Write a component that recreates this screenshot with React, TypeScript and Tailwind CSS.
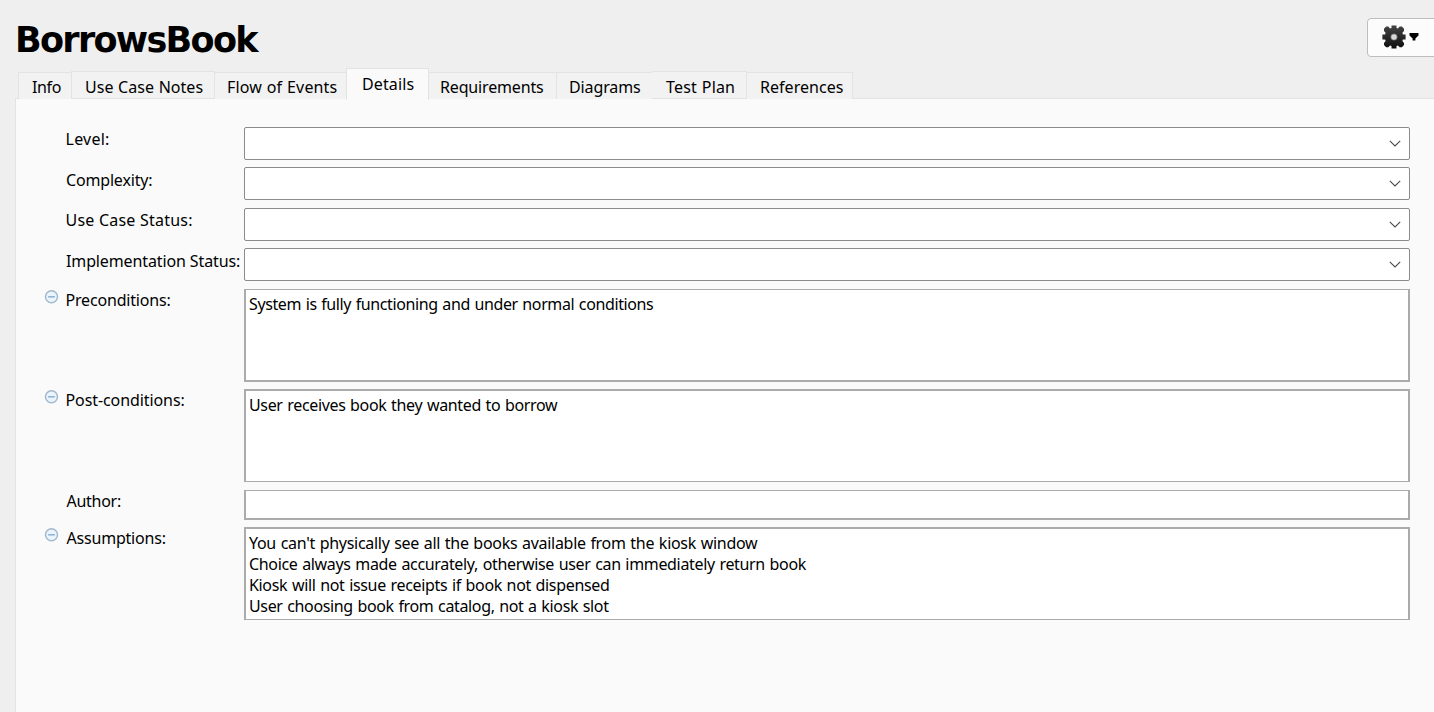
import React from "react";

type Tab = { label: string; box: string };

const TABS: Tab[] = [
  { label: "Info", box: "w-[53px] h-[27px] border-l pl-[13px] pt-[4px] tracking-[-0.35px]" },
  { label: "Use Case Notes", box: "w-[144px] h-[28px] border-x border-b pl-[13px] pt-[5px] tracking-[0.02px]" },
  { label: "Flow of Events", box: "w-[131px] h-[27px] pl-[12px] pt-[4px] tracking-[0.15px]" },
  { label: "Details", box: "w-[83px] h-[32px] border-x bg-[#fafafa] pl-[15px] pt-[5px] tracking-[0.12px]" },
  { label: "Requirements", box: "w-[128px] h-[27px] border-r pl-[11px] pt-[4px] tracking-[-0.16px]" },
  { label: "Diagrams", box: "w-[95px] h-[27px] pl-[12px] pt-[4px] tracking-[-0.12px]" },
  { label: "Test Plan", box: "w-[95px] h-[28px] border-r border-b pl-[14px] pt-[5px] tracking-[0.18px]" },
  { label: "References", box: "w-[106px] h-[27px] border-r pl-[13px] pt-[4px] tracking-[0.04px]" },
];

function Chevron() {
  return (
    <svg width="12" height="8" viewBox="0 0 12 8" fill="none" stroke="#4a4a4a" strokeWidth="1.1">
      <path d="M0.8 0.8 L6 6 L11.2 0.8" />
    </svg>
  );
}

function Collapse() {
  return (
    <svg width="15" height="15" viewBox="0 0 15 15" fill="none">
      <circle cx="7.5" cy="6.8" r="6" fill="#eaf4fc" stroke="#a3b9cb" strokeWidth="1.5" />
      <path d="M4.1 6.8h6.8" stroke="#8fb0cf" strokeWidth="1.5" />
    </svg>
  );
}

function Row({
  label,
  labelClass,
  rowClass,
  collapsible = false,
  children,
}: {
  label: string;
  labelClass: string;
  rowClass: string;
  collapsible?: boolean;
  children: React.ReactNode;
}) {
  return (
    <div className={`flex items-start ${rowClass}`}>
      <div className="w-[21px] shrink-0 pt-px">{collapsible && <Collapse />}</div>
      <div className={`w-[179px] shrink-0 whitespace-nowrap leading-[20px] ${labelClass}`}>{label}</div>
      {children}
    </div>
  );
}

function Select() {
  return (
    <button className="flex h-[33px] w-[1166px] shrink-0 items-center justify-end rounded-[2px] border border-[#8b8b8b] bg-white pr-[8px]">
      <Chevron />
    </button>
  );
}

function Field({ className, lines = [] }: { className: string; lines?: { text: string; spacing: string }[] }) {
  return (
    <div className={`w-[1166px] shrink-0 overflow-hidden border-x-2 border-[#ababad] bg-white pl-[3px] leading-[21px] [word-spacing:0.8px] ${className}`}>
      {lines.map((l) => (
        <div key={l.text} className={`whitespace-nowrap ${l.spacing}`}>
          {l.text}
        </div>
      ))}
    </div>
  );
}

function GearIcon() {
  return (
    <svg width="24" height="24" viewBox="-12 -12 24 24">
      <defs>
        <linearGradient id="gear" x1="0" y1="-12" x2="0" y2="12" gradientUnits="userSpaceOnUse">
          <stop offset="0" stopColor="#454545" />
          <stop offset="1" stopColor="#0d0d0d" />
        </linearGradient>
      </defs>
      <path
        fill="url(#gear)"
        d="M-2.5 -11.6h5v2.6l1.4.4 1.8-1.8h2.2l2.1 2.1v2.2l-1.6 1.8.5 1.7h2.7v5.2h-2.7l-.5 1.5 1.6 1.8v2.2l-2.1 2.1h-2.2l-1.8-1.8-1.4.6v2.6h-5v-2.6l-1.4-.6-1.8 1.8h-2.2l-2.1-2.1v-2.2l1.6-1.8-.5-1.5h-2.7v-5.2h2.7l.5-1.7-1.6-1.8v-2.2l2.1-2.1h2.2l1.8 1.8 1.4-.4z"
      />
      <circle r="3.1" fill="#d8d8d8" stroke="#888" strokeWidth="0.8" />
    </svg>
  );
}

export default function App() {
  return (
    <div className="flex h-[712px] w-[1434px] flex-col overflow-hidden bg-[#efefef] font-['Noto_Sans',sans-serif] text-[16px] text-black">
      <header className="flex h-[68px] shrink-0 items-start justify-between pl-[15px]">
        <h1 className="pt-[19px] font-['DejaVu_Sans',sans-serif] text-[35px] font-bold leading-[42px] tracking-[-1.7px]">
          BorrowsBook
        </h1>
        <button className="mt-[18px] -mr-[5px] flex h-[39px] w-[72px] items-center rounded-[4px] border border-[#bdbdbd] bg-[#fcfcfc] pb-[2px] pl-[14px]">
          <GearIcon />
          <svg className="mt-px ml-[3px]" width="10" height="8" viewBox="0 0 10 8">
            <path d="M0.5 0h9v2.6L6.4 5.6v1.9H3.6V5.6L0.5 2.6z" fill="#000" />
          </svg>
        </button>
      </header>

      <nav className="z-10 flex h-[31px] shrink-0 items-start pl-[18px] [word-spacing:0.5px]">
        {TABS.map((t) => (
          <div
            key={t.label}
            className={`shrink-0 whitespace-nowrap border-t border-[#e3e3e3] leading-[20px] ${t.box} ${
              t.label === "Details" ? "" : t.box.includes("h-[28px]") ? "mt-[3px] bg-[#f2f2f2]" : "mt-[4px] bg-[#f2f2f2]"
            }`}
          >
            {t.label}
          </div>
        ))}
      </nav>

      <main className="-mt-px ml-[15px] flex grow flex-col border-l border-t border-[#e3e3e3] bg-[#fafafa] pl-[28px] pt-[28px]">
        <Row label="Level:" rowClass="h-[40px]" labelClass="pt-[2px] pl-[0.5px] tracking-[0.25px]">
          <Select />
        </Row>
        <Row label="Complexity:" rowClass="h-[41px]" labelClass="pt-[3px] pl-px tracking-[-0.17px]">
          <Select />
        </Row>
        <Row label="Use Case Status:" rowClass="h-[40px]" labelClass="pt-[2px] pl-[0.5px] tracking-[0.22px]">
          <Select />
        </Row>
        <Row label="Implementation Status:" rowClass="h-[41px]" labelClass="pt-[3px] pl-px tracking-[-0.12px]">
          <Select />
        </Row>
        <Row label="Preconditions:" collapsible rowClass="h-[100px]" labelClass="pt-px pl-[0.5px] tracking-[-0.18px]">
          <Field
            className="h-[93px] border-b-2 border-t pt-[4px]"
            lines={[{ text: "System is fully functioning and under normal conditions", spacing: "tracking-[-0.385px]" }]}
          />
        </Row>
        <Row label="Post-conditions:" collapsible rowClass="h-[101px]" labelClass="pt-px pl-[0.5px] tracking-[-0.09px]">
          <Field
            className="h-[93px] border-b border-t-2 pt-[4px]"
            lines={[{ text: "User receives book they wanted to borrow", spacing: "tracking-[-0.34px]" }]}
          />
        </Row>
        <Row label="Author:" rowClass="h-[37px]" labelClass="pt-px pl-[1.5px] tracking-[-0.28px]">
          <Field className="h-[30px] border-b-2 border-t" />
        </Row>
        <Row label="Assumptions:" collapsible rowClass="h-[93px]" labelClass="pt-px pl-[1.5px] tracking-[-0.2px]">
          <Field
            className="h-[93px] border-b border-t-2 pt-[4px]"
            lines={[
              { text: "You can't physically see all the books available from the kiosk window", spacing: "tracking-[-0.285px]" },
              { text: "Choice always made accurately, otherwise user can immediately return book", spacing: "tracking-[-0.33px]" },
              { text: "Kiosk will not issue receipts if book not dispensed", spacing: "tracking-[-0.33px]" },
              { text: "User choosing book from catalog, not a kiosk slot", spacing: "tracking-[-0.35px]" },
            ]}
          />
        </Row>
      </main>
    </div>
  );
}
